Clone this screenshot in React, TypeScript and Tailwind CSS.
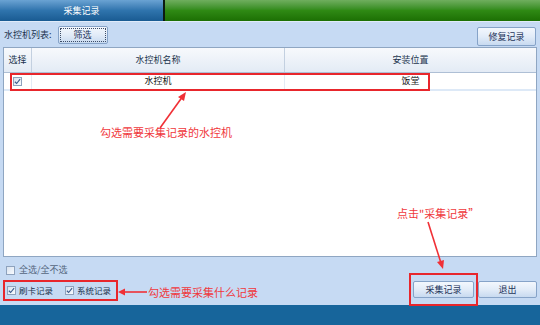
import React from "react";

const font = { fontFamily: '"Noto Sans CJK SC", "Noto Sans", sans-serif' };

const Check = ({ checked }: { checked?: boolean }) => (
  <span className="inline-flex w-[9px] h-[9px] shrink-0 items-center justify-center border border-[#8ea2bd] bg-linear-to-br from-[#d9e2ee] to-[#f8fbff]">
    {checked && (
      <svg viewBox="0 0 8 8" className="w-[7px] h-[7px]">
        <path d="M1 4.3 L3 6.3 L7 1.4" fill="none" stroke="#3b5b8c" strokeWidth="1.3" />
      </svg>
    )}
  </span>
);

const Btn = ({ label, className = "" }: { label: string; className?: string }) => (
  <button
    className={`flex items-center justify-center border border-[#86a3c8] rounded-[2px] bg-linear-to-b from-[#f3f7fd] via-[#e2ecf8] to-[#c8daf0] text-[9px] text-[#1f355a] leading-none whitespace-nowrap ${className}`}
  >
    {label}
  </button>
);

export default function App() {
  return (
    <div style={font} className="relative w-[540px] h-[325px] flex flex-col bg-[#c6daf3] text-[#1c2b3e] overflow-hidden whitespace-nowrap">
      {/* title bar */}
      <div className="flex h-[21px] shrink-0">
        <div className="w-[163px] flex items-center justify-center bg-linear-to-b from-[#6aa3d3] via-[#2f74ad] to-[#195b92] text-white text-[9px]">
          采集记录
        </div>
        <div className="w-[2px] bg-[#0d1a12]" />
        <div className="flex-1 bg-linear-to-b from-[#6fae5e] via-[#2f8a14] to-[#1c6f04]" />
      </div>
      <div className="h-[1px] shrink-0 bg-[#e0ebf9]" />

      {/* toolbar */}
      <div className="flex items-center h-[25px] shrink-0 pl-[4px] pr-[4px]">
        <span className="text-[9px] text-[#22344e]">水控机列表:</span>
        <Btn
          label="筛选"
          className="ml-[6px] w-[50px] h-[18px] outline-1 outline-dotted outline-[#3c4c66] outline-offset-[-3px]"
        />
        <Btn label="修复记录" className="ml-auto mt-[3px] w-[59px] h-[19px]" />
      </div>

      {/* table */}
      <div className="mx-[3px] h-[210px] shrink-0 flex flex-col border border-[#8fa6c2] bg-white">
        <div className="flex h-[25px] shrink-0 border-b border-[#aebfd5] bg-linear-to-b from-[#f7f9fc] to-[#e3ebf5] text-[9px] text-[#22344e]">
          <div className="w-[28px] flex items-center justify-center border-r border-[#c3d0e0]">选择</div>
          <div className="w-[253px] flex items-center justify-center border-r border-[#c3d0e0]">水控机名称</div>
          <div className="flex-1 flex items-center justify-center">安装位置</div>
        </div>
        <div className="flex h-[18px] shrink-0 border-b-2 border-[#dde9f7] text-[9px] text-[#111]">
          <div className="w-[28px] flex items-center justify-center border-r border-[#e3ebf5]">
            <Check checked />
          </div>
          <div className="w-[253px] flex items-center justify-center border-r border-[#e3ebf5]">水控机</div>
          <div className="flex-1 flex items-center justify-center">饭堂</div>
        </div>
      </div>

      {/* select all */}
      <div className="flex items-center gap-[4px] h-[20px] mt-[3px] shrink-0 pl-[6px] text-[9px] text-[#55667e]">
        <Check />
        <span>全选/全不选</span>
      </div>

      {/* record types + actions */}
      <div className="flex h-[25px] shrink-0 pl-[3px] pr-[3px]">
        <div className="flex items-center h-[21px] w-[115px] border-2 border-[#e8262c] pl-[2px] gap-[3px] text-[8.5px] text-[#22344e]">
          <Check checked />
          <span>刷卡记录</span>
          <span className="ml-[9px] flex">
            <Check checked />
          </span>
          <span>系统记录</span>
        </div>
        <div className="ml-auto flex items-start pt-[1px] gap-[4px]">
          <Btn label="采集记录" className="w-[61px] h-[17px]" />
          <Btn label="退出" className="w-[59px] h-[17px]" />
        </div>
      </div>

      {/* status bar */}
      <div className="flex-1 bg-[#17659b]" />

      {/* annotations */}
      <div className="absolute left-[10px] top-[73px] w-[420px] h-[18px] border-2 border-[#e8262c]" />
      <div className="absolute left-[409px] top-[273px] w-[69px] h-[33px] border-2 border-[#e8262c]" />
      <span className="absolute left-[100px] top-[124px] text-[11px] leading-[16px] text-[#f0383c]">勾选需要采集记录的水控机</span>
      <span className="absolute left-[397px] top-[205px] text-[11px] leading-[16px] text-[#f0383c]">点击"采集记录”</span>
      <span className="absolute left-[148px] top-[284px] text-[11px] leading-[16px] text-[#f0383c]">勾选需要采集什么记录</span>
      <svg className="absolute left-0 top-0 pointer-events-none" width="540" height="325" viewBox="0 0 540 325">
        <g stroke="#f03036" strokeWidth="1.6" fill="#f03036">
          <line x1="160" y1="128" x2="183" y2="96" />
          <polygon points="186,92 178,97 184,101" stroke="none" />
          <line x1="147" y1="292" x2="123" y2="292" />
          <polygon points="118,292 125,288.5 125,295.5" stroke="none" />
          <line x1="428" y1="222" x2="441" y2="263" />
          <polygon points="443,269 437,262 444,260" stroke="none" />
        </g>
      </svg>
    </div>
  );
}
